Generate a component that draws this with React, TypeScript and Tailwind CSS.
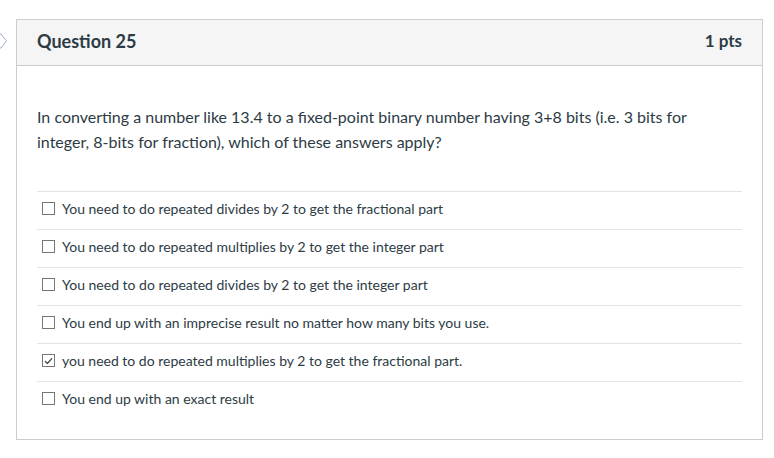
import React from 'react'

const answers = [
  { text: 'You need to do repeated divides by 2 to get the fractional part', checked: false },
  { text: 'You need to do repeated multiplies by 2 to get the integer part', checked: false },
  { text: 'You need to do repeated divides by 2 to get the integer part', checked: false },
  { text: 'You end up with an imprecise result no matter how many bits you use.', checked: false },
  { text: 'you need to do repeated multiplies by 2 to get the fractional part.', checked: true },
  { text: 'You end up with an exact result', checked: false },
]

function Box({ checked }: { checked: boolean }) {
  return (
    <div className="w-[13px] h-[13px] border border-[#767676] bg-white flex items-center justify-center shrink-0">
      {checked && (
        <svg width="9" height="8" viewBox="0 0 9 8" fill="none">
          <path d="M1 4.2 L3.4 6.4 L8 1.4" stroke="#333" strokeWidth="1.2" />
        </svg>
      )}
    </div>
  )
}

export default function App() {
  return (
    <div className="w-[774px] h-[458px] bg-white relative" style={{ fontFamily: 'Lato, "Noto Sans", sans-serif' }}>
      {/* partial flag chevron at the left edge */}
      <svg className="absolute left-0 top-[33px]" width="8" height="16" viewBox="0 0 8 16" fill="none">
        <path d="M-2 1 L1 1 L6.5 8 L1 15 L-2 15" stroke="#9fb1c3" strokeWidth="1" />
      </svg>
      <div className="pt-[19px] pl-[16px]">
        <div className="w-[747px] h-[421px] border border-[#c7cdd1] flex flex-col">
          <div className="h-[46px] bg-[#f5f5f5] border-b border-[#c7cdd1] flex items-center justify-between px-[20px] pb-[3px]">
            <span className="text-[18px] font-bold text-[#2d3b45]">Question 25</span>
            <span className="text-[17px] font-bold text-[#2d3b45]">1 pts</span>
          </div>
          <div className="px-[20px] pt-[38px]">
            <p className="text-[16px] leading-[25px] text-[#2d3b45]">
              In converting a number like 13.4 to a fixed-point binary number having 3+8 bits (i.e. 3 bits for integer, 8-bits for fraction), which of these answers apply?
            </p>
            <div className="mt-[37px]">
              {answers.map((a, i) => (
                <div key={i} className="h-[38px] border-t border-[#e2e5e7] flex items-center gap-[7px] pl-[5px] pb-[4px]">
                  <Box checked={a.checked} />
                  <span className="text-[14px] text-[#2d3b45]">{a.text}</span>
                </div>
              ))}
            </div>
          </div>
        </div>
      </div>
    </div>
  )
}
